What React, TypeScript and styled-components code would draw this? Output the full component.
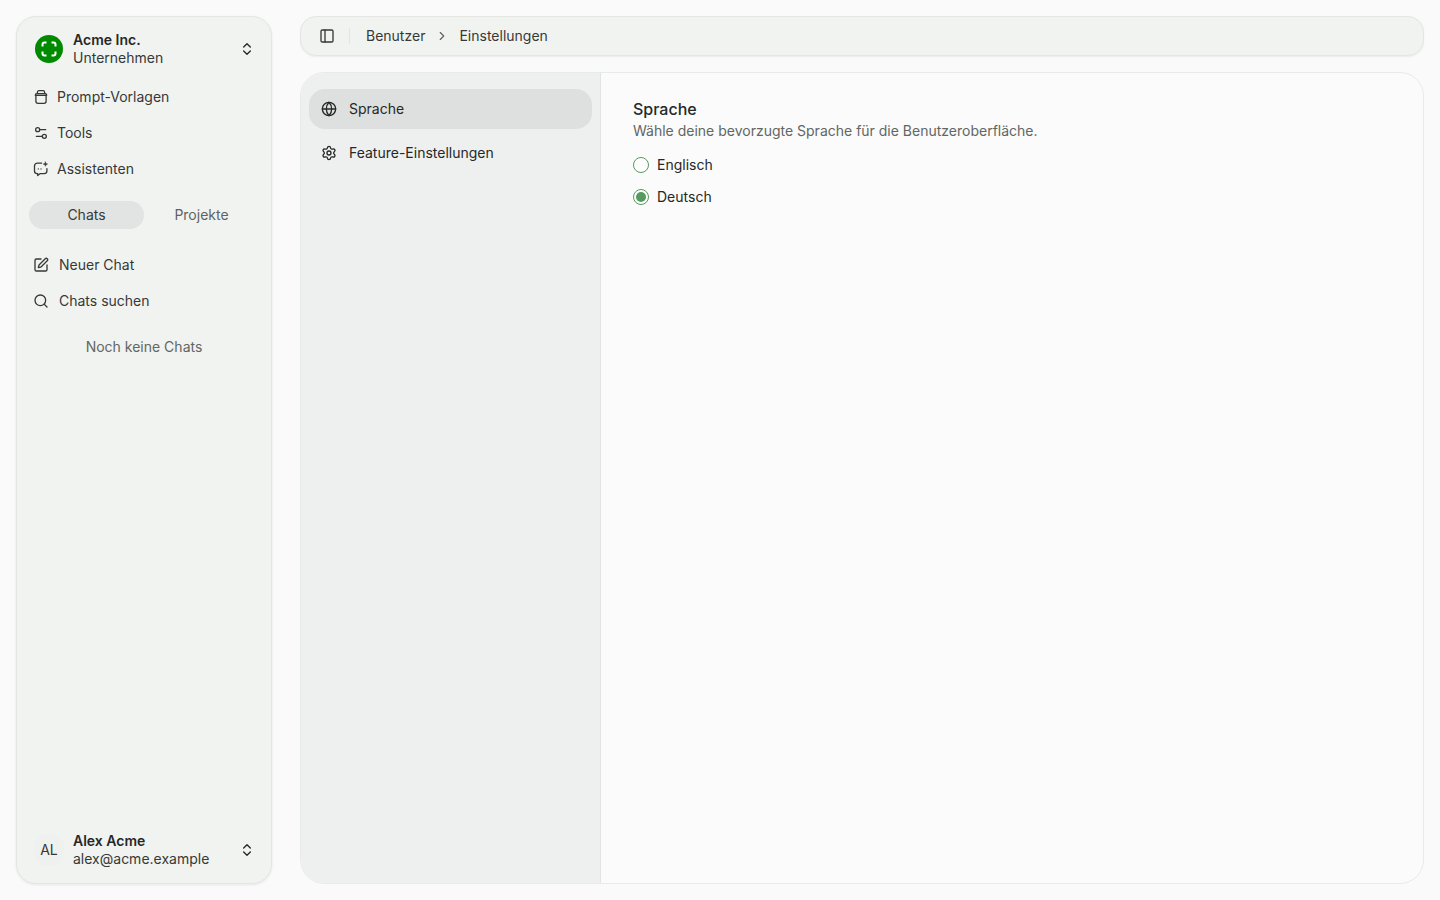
import * as React from "react";
import styled, { createGlobalStyle } from "styled-components";
import {
  ChevronRight,
  ChevronsUpDown,
  Globe,
  PanelLeft,
  Search,
  Settings,
  Settings2,
  SquarePen,
} from "lucide-react";

const GlobalStyle = createGlobalStyle`
  html, body {
    margin: 0;
    height: 100%;
    background: #fafafa;
    color: #262827;
    font-family: Inter, "Noto Sans", sans-serif;
    font-size: 14px;
    line-height: 20px;
  }
  #root {
    height: 100%;
  }
  * {
    box-sizing: border-box;
  }
`;

const JarIcon = () => (
  <svg width="16" height="16" viewBox="0 0 16 16" fill="none" stroke="currentColor" strokeWidth="1.3" strokeLinecap="round" strokeLinejoin="round">
    <path d="M4.4 4.6V3.2c0-.9.6-1.5 1.5-1.5h4.2c.9 0 1.5.6 1.5 1.5v1.4" />
    <path d="M2.3 6.3c0-.9.7-1.6 1.6-1.6h8.2c.9 0 1.6.7 1.6 1.6H2.3z" />
    <path d="M2.9 6.3v5.9c0 1.3.9 2.1 2.1 2.1h6c1.2 0 2.1-.8 2.1-2.1V6.3" />
  </svg>
);

const AssistantIcon = () => (
  <svg width="16" height="16" viewBox="0 0 16 16" fill="none" stroke="currentColor" strokeWidth="1.3" strokeLinecap="round" strokeLinejoin="round">
    <path d="M8.6 2.2H4.4C2.8 2.2 1.5 3.4 1.5 5v5c0 1.5 1.2 2.6 2.7 2.6h.5v1.9l2.6-1.9h3.8c1.5 0 2.8-1.1 2.8-2.6V7.6" />
    <path d="M12.4.9l.6 1.6 1.6.6-1.6.6-.6 1.6-.6-1.6-1.6-.6 1.6-.6z" fill="currentColor" strokeWidth="0.5" />
    <path d="M5.3 7.9h.01M8 7.9h.01" />
  </svg>
);

const LogoMark = () => (
  <svg width="28" height="28" viewBox="0 0 28 28">
    <circle cx="14" cy="14" r="14" fill="#008a00" />
    <path
      d="M11.5 7.5H9.5a2 2 0 0 0-2 2v2M16.5 7.5h2a2 2 0 0 1 2 2v2M20.5 16.5v2a2 2 0 0 1-2 2h-2M11.5 20.5h-2a2 2 0 0 1-2-2v-2"
      fill="none"
      stroke="#ffffff"
      strokeWidth="2"
    />
  </svg>
);

export default function App() {
  return (
    <>
      <GlobalStyle />
      <Page>
        <Sidebar>
          <AccountRow>
            <LogoMark />
            <AccountText>
              <AccountName>Acme Inc.</AccountName>
              <AccountSub>Unternehmen</AccountSub>
            </AccountText>
            <ChevronsUpDown size={16} />
          </AccountRow>

          <NavList>
            <NavItem>
              <JarIcon />
              Prompt-Vorlagen
            </NavItem>
            <NavItem>
              <Settings2 size={16} />
              Tools
            </NavItem>
            <NavItem>
              <AssistantIcon />
              Assistenten
            </NavItem>
          </NavList>

          <Tabs>
            <Tab $active>Chats</Tab>
            <Tab>Projekte</Tab>
          </Tabs>

          <ChatActions>
            <ChatAction>
              <SquarePen size={16} />
              Neuer Chat
            </ChatAction>
            <ChatAction>
              <Search size={16} />
              Chats suchen
            </ChatAction>
          </ChatActions>

          <EmptyNote>Noch keine Chats</EmptyNote>

          <UserRow>
            <Avatar>AL</Avatar>
            <AccountText>
              <AccountName>Alex Acme</AccountName>
              <AccountSub>alex@acme.example</AccountSub>
            </AccountText>
            <ChevronsUpDown size={16} />
          </UserRow>
        </Sidebar>

        <Main>
          <TopBar>
            <PanelLeft size={16} />
            <BarDivider />
            <Crumb>Benutzer</Crumb>
            <ChevronRight size={14} color="#5f6361" />
            <Crumb>Einstellungen</Crumb>
          </TopBar>

          <SettingsPanel>
            <SettingsNav>
              <SettingsItem $active>
                <Globe size={16} />
                Sprache
              </SettingsItem>
              <SettingsItem>
                <Settings size={16} />
                Feature-Einstellungen
              </SettingsItem>
            </SettingsNav>

            <SettingsBody>
              <SectionTitle>Sprache</SectionTitle>
              <SectionText>Wähle deine bevorzugte Sprache für die Benutzeroberfläche.</SectionText>
              <RadioList>
                <RadioRow>
                  <Radio />
                  Englisch
                </RadioRow>
                <RadioRow>
                  <Radio $checked />
                  Deutsch
                </RadioRow>
              </RadioList>
            </SettingsBody>
          </SettingsPanel>
        </Main>
      </Page>
    </>
  );
}

const Page = styled.div`
  display: flex;
  gap: 28px;
  height: 100vh;
  padding: 16px;
`;

const Sidebar = styled.aside`
  display: flex;
  flex-direction: column;
  flex: 0 0 256px;
  padding: 8px 12px 8px;
  background: #f1f3f1;
  border: 1px solid #e4e6e4;
  border-radius: 20px;
  box-shadow: 0 1px 3px rgba(0, 0, 0, 0.08);
`;

const AccountRow = styled.div`
  display: flex;
  align-items: center;
  gap: 10px;
  height: 48px;
  padding: 0 4px 0 6px;
  flex: none;
`;

const UserRow = styled(AccountRow)`
  margin-top: auto;
  margin-bottom: 1px;
  gap: 8px;
  padding-left: 4px;
`;

const AccountText = styled.div`
  flex: 1;
  min-width: 0;
  line-height: 18px;
`;

const AccountName = styled.div`
  font-weight: 600;
  color: #262827;
`;

const AccountSub = styled.div`
  color: #363937;
`;

const Avatar = styled.div`
  display: flex;
  align-items: center;
  justify-content: center;
  width: 32px;
  height: 32px;
  border-radius: 50%;
  background: #eff1ef;
  color: #363937;
`;

const NavList = styled.nav`
  display: flex;
  flex-direction: column;
  margin-top: 6px;
`;

const NavItem = styled.div`
  display: flex;
  align-items: center;
  gap: 8px;
  height: 36px;
  padding: 0 4px;
  color: #363937;
`;

const Tabs = styled.div`
  display: grid;
  grid-template-columns: 1fr 1fr;
  margin-top: 14px;
`;

const Tab = styled.div<{ $active?: boolean }>`
  display: flex;
  align-items: center;
  justify-content: center;
  height: 28px;
  border-radius: 14px;
  background: ${(p) => (p.$active ? "#e2e4e3" : "transparent")};
  color: ${(p) => (p.$active ? "#363937" : "#5f6361")};
`;

const ChatActions = styled.div`
  display: flex;
  flex-direction: column;
  margin-top: 18px;
`;

const ChatAction = styled(NavItem)`
  gap: 10px;
`;

const EmptyNote = styled.div`
  margin-top: 18px;
  text-align: center;
  color: #626664;
`;

const Main = styled.main`
  display: flex;
  flex-direction: column;
  flex: 1;
  min-width: 0;
  gap: 16px;
`;

const TopBar = styled.header`
  display: flex;
  align-items: center;
  flex: none;
  height: 40px;
  padding: 0 18px;
  background: #f1f3f1;
  border: 1px solid #e4e6e4;
  border-radius: 16px;
  box-shadow: 0 1px 2px rgba(0, 0, 0, 0.06);
  color: #363937;
  gap: 10px;
`;

const BarDivider = styled.div`
  width: 1px;
  height: 16px;
  margin: 0 6px 0 4px;
  background: #e2e4e2;
`;

const Crumb = styled.span`
  color: #363937;
`;

const SettingsPanel = styled.section`
  display: flex;
  flex: 1;
  min-height: 0;
  overflow: hidden;
  background: #fafbfa;
  border: 1px solid #e9ebe9;
  border-radius: 24px;
`;

const SettingsNav = styled.nav`
  display: flex;
  flex-direction: column;
  flex: 0 0 300px;
  gap: 4px;
  padding: 16px 8px;
  background: #eef0ef;
  border-right: 1px solid #e2e4e2;
`;

const SettingsItem = styled.div<{ $active?: boolean }>`
  display: flex;
  align-items: center;
  gap: 12px;
  height: 40px;
  padding: 0 12px;
  border-radius: 16px;
  background: ${(p) => (p.$active ? "#dde0df" : "transparent")};
  color: #262827;
`;

const SettingsBody = styled.div`
  flex: 1;
  padding: 24px 32px;
`;

const SectionTitle = styled.h2`
  margin: 0;
  font-size: 16px;
  line-height: 24px;
  font-weight: 500;
  color: #262827;
`;

const SectionText = styled.p`
  margin: 0;
  color: #626664;
`;

const RadioList = styled.div`
  display: flex;
  flex-direction: column;
  gap: 12px;
  margin-top: 14px;
`;

const RadioRow = styled.label`
  display: flex;
  align-items: center;
  gap: 8px;
  color: #262827;
`;

const Radio = styled.span<{ $checked?: boolean }>`
  display: flex;
  align-items: center;
  justify-content: center;
  width: 16px;
  height: 16px;
  border-radius: 50%;
  border: 1px solid #559a5e;
  background: #ffffff;

  &::after {
    content: "";
    display: ${(p) => (p.$checked ? "block" : "none")};
    width: 10px;
    height: 10px;
    border-radius: 50%;
    background: #559a5e;
  }
`;
